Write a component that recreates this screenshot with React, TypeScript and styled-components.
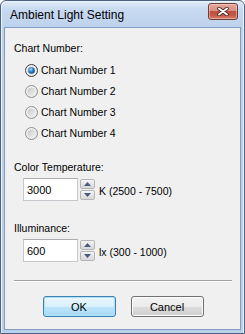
import React from "react";
import styled, { createGlobalStyle } from "styled-components";

const Global = createGlobalStyle`
  html, body { margin: 0; padding: 0; background: #ffffff; }
  body { font-family: "Liberation Sans", Arial, sans-serif; }
  * { box-sizing: border-box; }
`;

const Window = styled.div`
  width: 245px;
  height: 334px;
  border: 1px solid #4c6282;
  border-radius: 6px 6px 0 0;
  background: linear-gradient(#e3edf9 0px, #c8daf1 8px, #bdd2ec 26px, #b9cfea 100%);
  box-shadow: inset 1px 1px 0 #eef4fb, inset -1px 0 0 #eef4fb;
  display: flex;
  flex-direction: column;
  padding: 0 3px 3px;
`;

const TitleBar = styled.div`
  height: 26px;
  display: flex;
  align-items: center;
  justify-content: space-between;
  padding: 0 3px 0 6px;
`;

const Title = styled.span`
  font-size: 12px;
  color: #000;
  line-height: 14px;
  margin-top: 1px;
`;

const CloseButton = styled.div`
  width: 30px;
  height: 17px;
  margin-top: -6px;
  border: 1px solid #6b3b36;
  border-radius: 3px;
  background: linear-gradient(#e6a99e 0%, #d98e80 45%, #c24f40 50%, #c55846 75%, #d7826b 100%);
  box-shadow: inset 0 0 0 1px rgba(255, 215, 205, 0.5);
  display: flex;
  align-items: center;
  justify-content: center;
`;

const Client = styled.div`
  flex: 1;
  background: #f0f0f0;
  border: 1px solid #7f9cc3;
  display: flex;
  flex-direction: column;
  padding: 14px 8px 0 9px;
  font-size: 10.5px;
  color: #000;
`;

const GroupLabel = styled.div<{ $mt?: number }>`
  line-height: 13px;
  height: 13px;
  margin-top: ${(p) => p.$mt ?? 0}px;
`;

const RadioList = styled.div`
  margin-top: 5px;
  padding-left: 11px;
  display: flex;
  flex-direction: column;
`;

const RadioRow = styled.label`
  height: 21px;
  display: flex;
  align-items: center;
  gap: 3px;
  line-height: 13px;
`;

const SpinRow = styled.div`
  margin-top: 4px;
  padding-left: 9px;
  height: 23px;
  display: flex;
  align-items: center;
`;

const TextBox = styled.div`
  width: 55px;
  height: 23px;
  background: #ffffff;
  border: 1px solid #c5c8cd;
  border-top-color: #abadb3;
  display: flex;
  align-items: center;
  padding-left: 3px;
  font-size: 11px;
`;

const Spinner = styled.div`
  margin-left: 2px;
  display: flex;
  flex-direction: column;
  gap: 1px;
`;

const SpinButton = styled.div`
  width: 15px;
  height: 10px;
  border: 1px solid #b5b5b5;
  border-radius: 2px;
  background: linear-gradient(#f6f6f6, #e4e4e4 50%, #d9d9d9);
  display: flex;
  align-items: center;
  justify-content: center;
`;

const Range = styled.span`
  margin-left: 4px;
  margin-top: 2px;
`;

const Separator = styled.div`
  margin-top: 18px;
  height: 2px;
  border-top: 1px solid #a0a0a0;
  border-bottom: 1px solid #ffffff;
`;

const ButtonRow = styled.div`
  margin-top: 14px;
  display: flex;
  justify-content: center;
  gap: 15px;
`;

const Button = styled.div<{ $default?: boolean }>`
  width: 73px;
  height: 21px;
  border-radius: 3px;
  border: 1px solid ${(p) => (p.$default ? "#3c7fb1" : "#707070")};
  background: ${(p) =>
    p.$default
      ? "linear-gradient(#eaf6fd 0%, #d9f0fc 50%, #bee6fd 51%, #a7d9f5 100%)"
      : "linear-gradient(#f2f2f2 0%, #ebebeb 50%, #dddddd 51%, #cfcfcf 100%)"};
  box-shadow: inset 0 0 0 1px ${(p) => (p.$default ? "#aee2f9" : "#fcfcfc")};
  display: flex;
  align-items: center;
  justify-content: center;
  font-size: 11px;
`;

const RadioIcon = ({ checked }: { checked?: boolean }) => (
  <svg width="13" height="13" viewBox="0 0 13 13">
    <defs>
      <linearGradient id="rOuter" x1="0" y1="0" x2="1" y2="1">
        <stop offset="0" stopColor="#fbfbfb" />
        <stop offset="1" stopColor="#e2e2e2" />
      </linearGradient>
      <linearGradient id="rInner" x1="0" y1="0" x2="1" y2="1">
        <stop offset="0" stopColor="#c6c6c6" />
        <stop offset="1" stopColor="#f4f4f4" />
      </linearGradient>
      <radialGradient id="rDot" cx="0.4" cy="0.35" r="0.7">
        <stop offset="0" stopColor="#a9e0fb" />
        <stop offset="0.45" stopColor="#2e8ad6" />
        <stop offset="1" stopColor="#0f3d6e" />
      </radialGradient>
    </defs>
    <circle cx="6.5" cy="6.5" r="6" fill="url(#rOuter)" stroke={checked ? "#3a3a3a" : "#8e8f8f"} />
    <circle cx="6.5" cy="6.5" r="4" fill="url(#rInner)" />
    {checked && <circle cx="6.5" cy="6.5" r="3.3" fill="url(#rDot)" />}
  </svg>
);

const Arrow = ({ up }: { up?: boolean }) => (
  <svg width="7" height="4" viewBox="0 0 7 4">
    <path d={up ? "M0 4 L3.5 0 L7 4 Z" : "M0 0 L3.5 4 L7 0 Z"} fill="#4a5a7c" />
  </svg>
);

const CloseGlyph = () => (
  <svg width="12" height="9" viewBox="0 0 12 9">
    <path d="M2 1.5 L10 7.5 M10 1.5 L2 7.5" stroke="#4a2420" strokeWidth="3.6" strokeLinecap="round" />
    <path d="M2 1.5 L10 7.5 M10 1.5 L2 7.5" stroke="#ffffff" strokeWidth="2" strokeLinecap="round" />
  </svg>
);

const SpinField = ({ value, range }: { value: string; range: string }) => (
  <SpinRow>
    <TextBox>{value}</TextBox>
    <Spinner>
      <SpinButton>
        <Arrow up />
      </SpinButton>
      <SpinButton>
        <Arrow />
      </SpinButton>
    </Spinner>
    <Range>{range}</Range>
  </SpinRow>
);

export default function App() {
  const charts = ["Chart Number 1", "Chart Number 2", "Chart Number 3", "Chart Number 4"];
  return (
    <>
      <Global />
      <Window>
        <TitleBar>
          <Title>Ambient Light Setting</Title>
          <CloseButton>
            <CloseGlyph />
          </CloseButton>
        </TitleBar>
        <Client>
          <GroupLabel>Chart Number:</GroupLabel>
          <RadioList>
            {charts.map((c, i) => (
              <RadioRow key={c}>
                <RadioIcon checked={i === 0} />
                <span>{c}</span>
              </RadioRow>
            ))}
          </RadioList>
          <GroupLabel $mt={17}>Color Temperature:</GroupLabel>
          <SpinField value="3000" range="K (2500 - 7500)" />
          <GroupLabel $mt={21}>Illuminance:</GroupLabel>
          <SpinField value="600" range="lx (300 - 1000)" />
          <Separator />
          <ButtonRow>
            <Button $default>OK</Button>
            <Button>Cancel</Button>
          </ButtonRow>
        </Client>
      </Window>
    </>
  );
}
